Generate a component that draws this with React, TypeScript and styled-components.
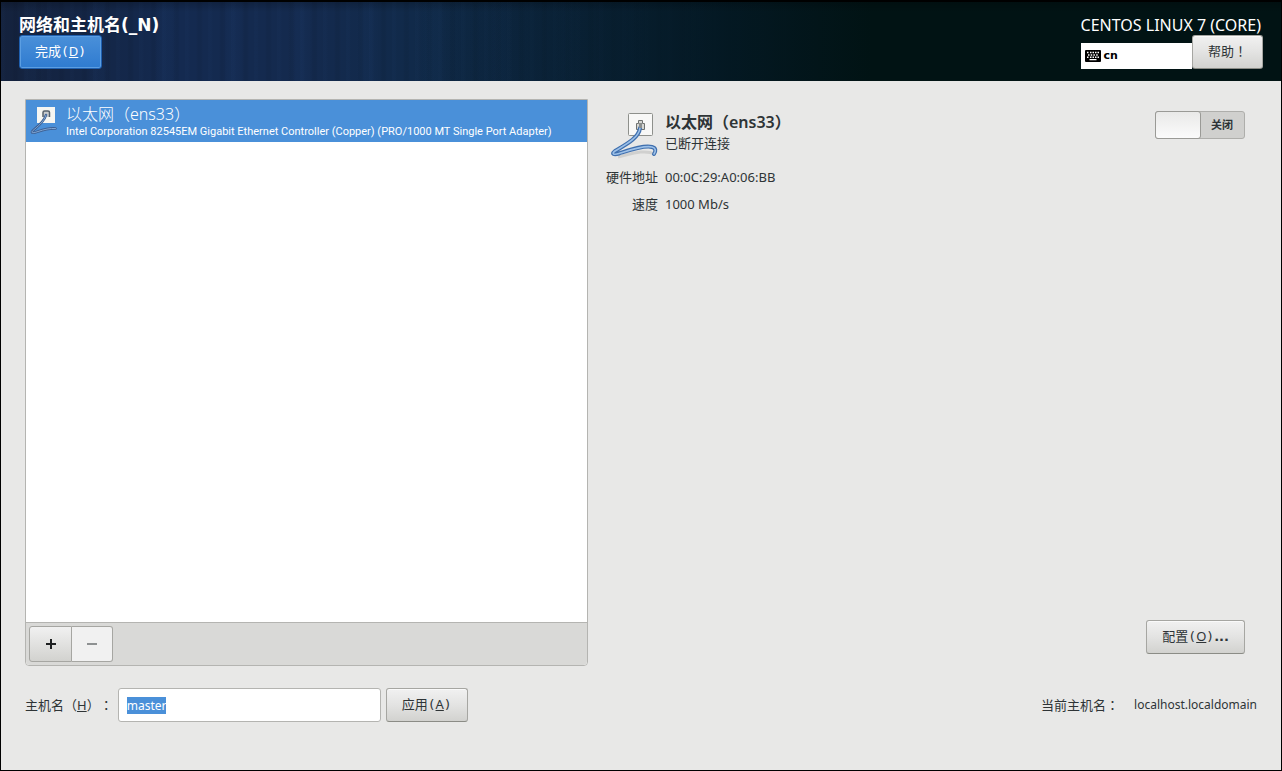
import { useEffect, useId, useRef, useState } from "react";
import styled, { createGlobalStyle, css } from "styled-components";

const GlobalStyle = createGlobalStyle`
  * { box-sizing: border-box; }
  body {
    margin: 0;
    background: #e8e8e7;
    color: #2e3436;
    font: 13px/18px "Noto Sans", "Noto Sans CJK SC", sans-serif;
    text-spacing-trim: space-all;
  }
  button, input { font: inherit; color: inherit; margin: 0; }
`;

const Screen = styled.div`
  display: flex;
  flex-direction: column;
  min-height: 100vh;
  border: 1px solid #000;
  border-top-width: 2px;
`;

const Header = styled.header`
  display: flex;
  justify-content: space-between;
  padding: 13px 18px 12px;
  color: #fff;
  background:
    linear-gradient(180deg, rgba(0, 0, 0, 0.2), rgba(0, 0, 0, 0) 10px),
    linear-gradient(90deg, rgba(0, 17, 18, 0) 32%, rgba(3, 23, 32, 0.9) 56%, #011314 68%),
    repeating-linear-gradient(90deg, rgba(50, 90, 150, 0.04) 0 3px, transparent 5px 11px, rgba(0, 0, 0, 0.05) 13px 16px, transparent 18px 23px),
    repeating-linear-gradient(90deg, transparent 0 20px, rgba(40, 90, 160, 0.05) 28px 34px, transparent 43px 67px),
    linear-gradient(90deg, #14223d, #142a50 14%, #142a4e 24%, #102a49 34%, #0d2742 60%);
`;

const Title = styled.h1`
  margin: 0;
  font-family: "DejaVu Sans", "Noto Sans CJK SC", sans-serif;
  font-size: 17px;
  line-height: 20px;
  font-weight: 700;
`;

const Product = styled.div`
  padding-right: 2px;
  font-size: 16px;
  line-height: 20px;
`;

const HeaderTools = styled.div`
  display: flex;
  align-items: flex-end;
`;

const Button = styled.button<{ $primary?: boolean }>`
  height: 34px;
  padding: 0 15px 2px;
  border: 1px solid #a6a6a2;
  border-bottom-color: #8b8c86;
  border-radius: 3px;
  background: linear-gradient(#f1f1f1, #e3e3e2 50%, #d2d2cf);
  box-shadow: inset 0 1px #fafafa;
  color: #2e3436;
  white-space: nowrap;
  ${(p) =>
    p.$primary &&
    css`
      color: #fff;
      border-color: #1f5fae;
      background: linear-gradient(#4a90d9, #2f7bd0);
      box-shadow: inset 0 0 0 1px #5b9ee2;
    `}
`;

const Mnemonic = styled.span`
  font-family: "DejaVu Sans Mono", monospace;

  u {
    font-family: "Noto Sans", sans-serif;
  }
`;

const Ellipsis = styled.span`
  font-family: "DejaVu Sans", sans-serif;
  font-weight: 700;
`;

const Layout = styled.button`
  flex: 1;
  display: flex;
  align-items: center;
  gap: 3px;
  height: 26px;
  padding: 0 4px;
  border: 0;
  background: #fff;
  color: #000;
  font-family: "DejaVu Sans", sans-serif;
  font-size: 11px;
  font-weight: 700;
`;

const CenteredMark = styled.span`
  font-family: "Noto Sans CJK TC", sans-serif;
`;

const Main = styled.main`
  flex: 1;
  display: grid;
  grid-template-columns: minmax(0, 563fr) minmax(0, 645fr);
  gap: 12px;
  padding: 18px 36px 22px 24px;
`;

const DevicePanel = styled.section`
  display: flex;
  flex-direction: column;
  border: 1px solid #b4b4b1;
  border-radius: 0 0 4px 4px;
  background: #fff;
`;

const DeviceList = styled.ul`
  flex: 1;
  margin: 0;
  padding: 0;
  list-style: none;
`;

const DeviceRow = styled.button`
  display: flex;
  align-items: center;
  gap: 8px;
  width: 100%;
  height: 42px;
  padding: 0 4px;
  border: 0;
  background: #4a90d9;
  color: #fff;
  text-align: left;
`;

const RowText = styled.span`
  display: flex;
  flex-direction: column;
`;

const RowName = styled.span`
  font-size: 16px;
  line-height: 22px;
  font-weight: 300;
`;

const RowHardware = styled.span`
  font-family: Roboto, sans-serif;
  font-size: 11px;
  line-height: 14px;
`;

const PanelToolbar = styled.div`
  display: flex;
  padding: 3px;
  border-top: 1px solid #b4b4b1;
  border-radius: 0 0 4px 4px;
  background: #d9d9d7;
`;

const ToolButton = styled.button`
  display: grid;
  place-items: center;
  width: 43px;
  height: 36px;
  padding: 0;
  border: 1px solid #a6a6a2;
  border-radius: 3px 0 0 3px;
  background: linear-gradient(#f1f1f1, #d2d2cf);
  color: #1d1f20;

  & + & {
    width: 41px;
    border-left: 0;
    border-radius: 0 3px 3px 0;
  }
  &:disabled {
    color: #8e9192;
    background: #f1f1f1;
  }
`;

const Details = styled.section`
  display: flex;
  flex-direction: column;
  align-items: flex-start;
  padding: 12px 0;
`;

const DetailsHead = styled.div`
  display: flex;
  align-self: stretch;
  align-items: flex-start;
  gap: 7px;
  padding-left: 10px;
`;

const DeviceName = styled.h2`
  margin: 0;
  font-size: 16px;
  line-height: 22px;
  font-weight: 600;
`;

const NameBlock = styled.div`
  flex: 1;
`;

const Status = styled.div`
  line-height: 20px;
`;

const Switch = styled.label`
  display: flex;
  align-items: center;
  width: 90px;
  height: 28px;
  border: 1px solid #aeaeab;
  border-radius: 3px;
  background: #d0d0ce;
  font-size: 11px;
  font-weight: 700;
`;

const SwitchKnob = styled.input`
  appearance: none;
  width: 46px;
  height: 28px;
  margin: 0 10px 0 -1px;
  border: 1px solid #9a9a96;
  border-radius: 3px;
  background: linear-gradient(#e9e9e8, #fbfbfb);
`;

const Facts = styled.dl`
  flex: 1;
  display: grid;
  grid-template-columns: 58px auto;
  align-content: start;
  gap: 7px;
  margin: 8px 0 0;
`;

const FactName = styled.dt`
  justify-self: end;
  line-height: 20px;
  white-space: nowrap;
`;

const FactValue = styled.dd`
  margin: 0;
  line-height: 20px;
`;

const ConfigureSlot = styled.div`
  align-self: flex-end;
`;

const Footer = styled.footer`
  display: flex;
  align-items: center;
  gap: 5px;
  padding: 0 24px 48px;
`;

const HostInput = styled.input`
  width: 263px;
  height: 34px;
  padding: 0 8px;
  border: 1px solid #b4b4b1;
  border-radius: 3px;
  background: #fff;
  outline: none;
  font-size: 12px;

  &::selection {
    background: #4a90d9;
    color: #fff;
  }
`;

const CurrentHost = styled.div`
  display: flex;
  gap: 15px;
  margin-left: auto;
`;

const HostValue = styled.span`
  font-size: 12px;
`;

function KeyboardIcon() {
  return (
    <svg width="16" height="12" viewBox="0 0 16 12" aria-hidden="true">
      <rect width="16" height="12" rx="1" fill="#000" />
      <path
        d="M2 2.5h1.5M5 2.5h1.5M7.5 2.5H9M10 2.5h1.5M12.5 2.5H14M3 5h1.5M5.7 5h1.5M8.4 5h1.5M11.2 5h1.500M2 7.3h1.5M5 7.3h1.5M7.5 7.3H9M10 7.3h1.5M12.5 7.3H14M4.5 9.6h7"
        stroke="#fff"
        strokeWidth="1.4"
      />
    </svg>
  );
}

function WiredIcon() {
  const cable = "M30 17C29 27 15 34 5 40C1 43 4 44 9 42.500C20 39 34 34 42 36C46 37 46 40 44 43";
  return (
    <svg width="48" height="48" viewBox="0 0 48 48" aria-hidden="true">
      <path d="M8 46C21 43 34 38 45 43" fill="none" stroke="#000" strokeOpacity=".1" strokeWidth="3" />
      <rect x="18.500" y="2.500" width="24" height="22" rx="1" fill="#f8f8f7" stroke="#8e908c" />
      <path d="M26.500 18.500V12.500H28.500V9.500H32.500V12.500H34.500V18.500Z" fill="#d6d7d4" stroke="#6f7270" />
      <path d={cable} fill="none" stroke="#3f6fae" strokeWidth="4" strokeLinecap="round" strokeLinejoin="round" />
      <path d={cable} fill="none" stroke="#9cc0e8" strokeWidth="1.600" strokeLinecap="round" strokeLinejoin="round" />
      <path d="M30.500 12V17" stroke="#8b8f8e" strokeWidth="3" />
    </svg>
  );
}

function SmallWiredIcon() {
  const cable = "M16 9C14 16 7 21 2.500 25C0.500 27.500 4 27 8 25.500C14 23.500 20 22 25.500 22.500";
  return (
    <svg width="28" height="30" viewBox="0 0 28 30" aria-hidden="true">
      <rect x="7" y="1" width="18" height="16" fill="#f6f6f2" />
      <path d="M13 11V6.500Q13 5 14.500 5H18Q19.500 5 19.500 6.500V11" fill="#c9ccce" stroke="#55606b" strokeWidth="1.500" />
      <path d={cable} fill="none" stroke="#3d5f92" strokeWidth="2.600" strokeLinecap="round" strokeLinejoin="round" />
      <path d={cable} fill="none" stroke="#7fa6d4" strokeWidth="1" strokeLinecap="round" strokeLinejoin="round" />
    </svg>
  );
}

export default function App() {
  const hostId = useId();
  const host = useRef<HTMLInputElement>(null);
  const [enabled, setEnabled] = useState(false);

  useEffect(() => {
    host.current?.focus();
    host.current?.select();
  }, []);

  return (
    <>
      <GlobalStyle />
      <Screen lang="zh-CN">
        <Header>
          <div>
            <Title>网络和主机名(_N)</Title>
            <Button $primary type="button">完成<Mnemonic>(<u>D</u>)</Mnemonic></Button>
          </div>
          <div>
            <Product>CENTOS LINUX 7 (CORE)</Product>
            <HeaderTools>
              <Layout type="button"><KeyboardIcon />cn</Layout>
              <Button type="button">帮助<CenteredMark lang="zh-TW">！</CenteredMark></Button>
            </HeaderTools>
          </div>
        </Header>
        <Main>
          <DevicePanel>
            <DeviceList>
              <li>
                <DeviceRow type="button">
                  <SmallWiredIcon />
                  <RowText>
                    <RowName>以太网（ens33）</RowName>
                    <RowHardware>
                      Intel Corporation 82545EM Gigabit Ethernet Controller (Copper) (PRO/1000 MT Single Port Adapter)
                    </RowHardware>
                  </RowText>
                </DeviceRow>
              </li>
            </DeviceList>
            <PanelToolbar>
              <ToolButton type="button" aria-label="添加">
                <svg width="12" height="12" aria-hidden="true"><path d="M1 6H11M6 1V11" stroke="currentColor" strokeWidth="2" /></svg>
              </ToolButton>
              <ToolButton type="button" aria-label="删除" disabled>
                <svg width="12" height="12" aria-hidden="true"><path d="M1 6H11" stroke="currentColor" strokeWidth="2" /></svg>
              </ToolButton>
            </PanelToolbar>
          </DevicePanel>
          <Details>
            <DetailsHead>
              <WiredIcon />
              <NameBlock>
                <DeviceName>以太网（ens33）</DeviceName>
                <Status>已断开连接</Status>
              </NameBlock>
              <Switch>
                <SwitchKnob type="checkbox" role="switch" checked={enabled} onChange={(e) => setEnabled(e.target.checked)} />
                关闭
              </Switch>
            </DetailsHead>
            <Facts>
              <FactName>硬件地址</FactName>
              <FactValue>00:0C:29:A0:06:BB</FactValue>
              <FactName>速度</FactName>
              <FactValue>1000 Mb/s</FactValue>
            </Facts>
            <ConfigureSlot>
              <Button type="button">配置<Mnemonic>(<u>O</u>)</Mnemonic><Ellipsis>...</Ellipsis></Button>
            </ConfigureSlot>
          </Details>
        </Main>
        <Footer>
          <label htmlFor={hostId}>
            主机名（<u>H</u>）<CenteredMark lang="zh-TW">：</CenteredMark>
          </label>
          <HostInput id={hostId} ref={host} defaultValue="master" />
          <Button type="button">应用<Mnemonic>(<u>A</u>)</Mnemonic></Button>
          <CurrentHost>
            <span>当前主机名<CenteredMark lang="zh-TW">：</CenteredMark></span>
            <HostValue>localhost.localdomain</HostValue>
          </CurrentHost>
        </Footer>
      </Screen>
    </>
  );
}
